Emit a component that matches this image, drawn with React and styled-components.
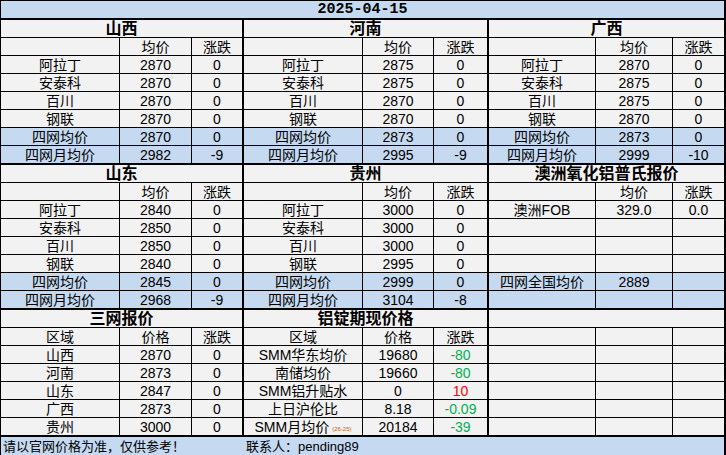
import React from "react";
import styled, { createGlobalStyle } from "styled-components";

const GlobalStyle = createGlobalStyle`
  html, body {
    margin: 0;
    padding: 0;
    background: #fff;
  }
`;

const BLUE = "#c5d9f1";
const GRAY = "#f2f2f2";
const GREEN = "#00b050";
const RED = "#ff0000";

const Sheet = styled.div`
  width: 726px;
  height: 455px;
  box-sizing: border-box;
  padding: 1px 2px 0 1px;
  background: #000;
  display: flex;
  flex-direction: column;
  gap: 2px;
  overflow: hidden;
  font-family: "Liberation Sans", "Noto Sans CJK SC", sans-serif;
  color: #000;
`;

const Title = styled.div`
  height: 17px;
  background: ${BLUE};
  text-align: center;
  font-family: "Liberation Mono", monospace;
  font-weight: bold;
  font-size: 15px;
  line-height: 18px;
`;

const Block = styled.div`
  display: flex;
  gap: 2px;
`;

const Grid = styled.div`
  display: grid;
  grid-template-columns: ${(p) => p.$cols};
  grid-auto-rows: 17px;
  gap: 1px;
`;

const Cell = styled.div`
  background: ${(p) => (p.$blue ? BLUE : GRAY)};
  color: ${(p) => p.$color || "#000"};
  text-align: center;
  font-size: 14px;
  line-height: 18px;
  white-space: nowrap;
  overflow: hidden;
`;

const HeadCell = styled(Cell)`
  grid-column: 1 / -1;
  font-weight: bold;
  font-size: 16px;
  line-height: 18px;
`;

const Tiny = styled.span`
  font-size: 6px;
  color: #c55a11;
  margin-left: 3px;
  vertical-align: 1px;
`;

const Footer = styled.div`
  height: 18px;
  background: ${BLUE};
  display: grid;
  grid-template-columns: 243px 1fr;
  font-size: 13px;
  line-height: 19px;
  white-space: nowrap;
`;

const FooterText = styled.div`
  padding-left: 2px;
`;

const COLS = ["118px 71px 50px", "118px 70px 53px", "106px 76px 51px"];

const region = (title, v, avg, month, chg) => ({
  title,
  rows: [
    { c: ["", "均价", "涨跌"] },
    { c: ["阿拉丁", v[0], "0"] },
    { c: ["安泰科", v[1], "0"] },
    { c: ["百川", v[2], "0"] },
    { c: ["钢联", v[3], "0"] },
    { c: ["四网均价", avg, "0"], blue: true },
    { c: ["四网月均价", month, chg], blue: true },
  ],
});

const blocks = [
  [
    region("山西", ["2870", "2870", "2870", "2870"], "2870", "2982", "-9"),
    region("河南", ["2875", "2875", "2870", "2870"], "2873", "2995", "-9"),
    region("广西", ["2870", "2875", "2875", "2870"], "2873", "2999", "-10"),
  ],
  [
    region("山东", ["2840", "2850", "2850", "2840"], "2845", "2968", "-9"),
    region("贵州", ["3000", "3000", "3000", "2995"], "2999", "3104", "-8"),
    {
      title: "澳洲氧化铝普氏报价",
      rows: [
        { c: ["", "均价", "涨跌"] },
        { c: ["澳洲FOB", "329.0", "0.0"] },
        { c: ["", "", ""] },
        { c: ["", "", ""] },
        { c: ["", "", ""] },
        { c: ["四网全国均价", "2889", ""], blue: true },
        { c: ["", "", ""], blue: true },
      ],
    },
  ],
  [
    {
      title: "三网报价",
      rows: [
        { c: ["区域", "价格", "涨跌"] },
        { c: ["山西", "2870", "0"] },
        { c: ["河南", "2873", "0"] },
        { c: ["山东", "2847", "0"] },
        { c: ["广西", "2873", "0"] },
        { c: ["贵州", "3000", "0"] },
      ],
    },
    {
      title: "铝锭期现价格",
      rows: [
        { c: ["区域", "价格", "涨跌"] },
        { c: ["SMM华东均价", "19680", "-80"], color: GREEN },
        { c: ["南储均价", "19660", "-80"], color: GREEN },
        { c: ["SMM铝升贴水", "0", "10"], color: RED },
        { c: ["上日沪伦比", "8.18", "-0.09"], color: GREEN },
        { c: ["SMM月均价", "20184", "-39"], color: GREEN, tiny: "(26-25)" },
      ],
    },
    {
      title: "",
      rows: Array.from({ length: 6 }, () => ({ c: ["", "", ""] })),
    },
  ],
];

function Panel({ data, cols }) {
  return (
    <Grid $cols={cols}>
      <HeadCell>{data.title}</HeadCell>
      {data.rows.map((row, i) =>
        row.c.map((text, j) => (
          <Cell
            key={i + "-" + j}
            $blue={row.blue}
            $color={j === 2 ? row.color : undefined}
          >
            {text}
            {j === 0 && row.tiny && <Tiny>{row.tiny}</Tiny>}
          </Cell>
        ))
      )}
    </Grid>
  );
}

export default function App() {
  return (
    <>
      <GlobalStyle />
      <Sheet>
        <Title>2025-04-15</Title>
        {blocks.map((block, b) => (
          <Block key={b}>
            {block.map((panel, p) => (
              <Panel key={p} data={panel} cols={COLS[p]} />
            ))}
          </Block>
        ))}
        <Footer>
          <FooterText>请以官网价格为准，仅供参考！</FooterText>
          <FooterText>联系人：pending89</FooterText>
        </Footer>
      </Sheet>
    </>
  );
}
